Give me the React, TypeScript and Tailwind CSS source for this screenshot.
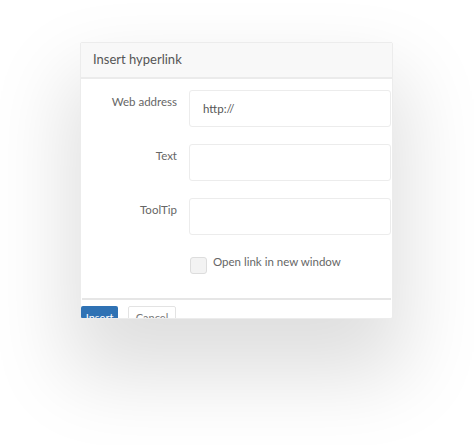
import React from "react";

export default function App() {
  return (
    <div
      className="w-[474px] h-[445px] bg-white pt-[42px] pl-[80px] overflow-hidden"
      style={{ fontFamily: "Lato, 'Open Sans', sans-serif" }}
    >
      <div className="w-[313px] h-[277px] bg-white border border-[#ececec] rounded-[2px] overflow-hidden shadow-[0_45px_80px_12px_rgba(0,0,0,0.13)] flex flex-col">
        <div className="h-[36px] shrink-0 bg-[#f8f8f8] border-b-2 border-[#ebebeb] flex items-center pl-[12px] text-[13px] text-[#555]">
          Insert hyperlink
        </div>
        <div className="flex flex-col pt-[11px] gap-[17px] pr-[1px]">
          {["Web address", "Text", "ToolTip"].map((label, i) => (
            <div key={label} className="flex">
              <div className="w-[96px] shrink-0 text-right text-[11.5px] text-[#666] pt-[3px]">
                {label}
              </div>
              <div className="ml-[12px] flex-1 h-[37px] border border-[#ececec] rounded-[3px] pl-[13px] text-[11.5px] text-[#555] flex items-center">
                {i === 0 ? "http://" : ""}
              </div>
            </div>
          ))}
          <div className="flex pl-[109px] gap-[6px] mt-[1px]">
            <div className="w-[17px] h-[17px] mt-[4px] border border-[#ddd] bg-[#f3f3f3] rounded-[3px]" />
            <div className="text-[11.5px] text-[#666]">Open link in new window</div>
          </div>
        </div>
        <div className="mt-[24px] h-[2px] mx-[1px] bg-[#e6e6e6] shrink-0" />
        <div className="flex gap-[10px] pt-[6px]">
          <div className="w-[37px] h-[24px] bg-[#2f72b4] rounded-[2px] text-white text-[11px] flex items-center justify-center">
            Insert
          </div>
          <div className="w-[48px] h-[24px] border border-[#e3e3e3] rounded-[2px] text-[#777] text-[11px] flex items-center justify-center">
            Cancel
          </div>
        </div>
      </div>
    </div>
  );
}
